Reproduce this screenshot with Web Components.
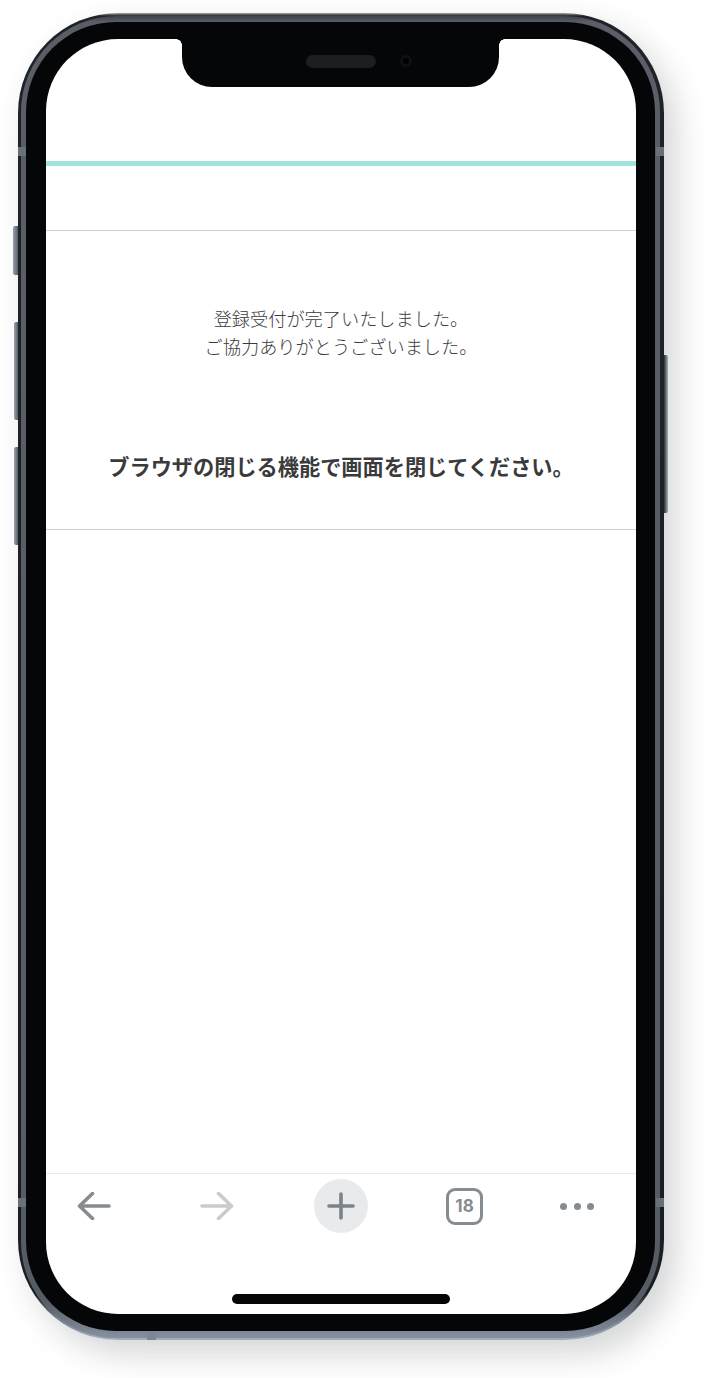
<!DOCTYPE html>
<html lang="ja">
<head>
<meta charset="utf-8">
<title>登録受付完了</title>
<style>
  html, body { margin: 0; background: #fff; overflow: hidden; }
  body { padding: 13px 0 0 18px; height: 1365px; box-sizing: content-box; }
</style>
</head>
<body>
<phone-frame>
  <page-header></page-header>
  <notice-panel>
    <span slot="lead">登録受付が完了いたしました。<br>ご協力ありがとうございました。</span>
    <span slot="close">ブラウザの閉じる機能で画面を閉じてください。</span>
  </notice-panel>
  <browser-toolbar count="18"></browser-toolbar>
</phone-frame>

<script>
class PhoneFrame extends HTMLElement {
  constructor() {
    super()
    this.attachShadow({mode: 'open'})
  }

  connectedCallback() {
    this.shadowRoot.innerHTML = `
      <style>
        :host { display: block; position: relative; width: 646px; height: 1327px; }
        .hull {
          box-sizing: border-box;
          width: 100%;
          height: 100%;
          padding: 3px 4px 2px 3px;
          border-radius: 100px;
          background: linear-gradient(180deg, #a2a5a9 0, #1f2226 3px, #1a1d21 1280px, #76808d 1305px, #a5afbb 100%);
          box-shadow: 12px 14px 32px rgba(40, 44, 50, .2);
        }
        .band {
          box-sizing: border-box;
          height: 100%;
          padding: 6px 5px 7px 5px;
          border-radius: 96px;
          background: linear-gradient(180deg, #3e4248 0, #5a5f67 6px, #565c64 1285px, #8691a0 100%);
        }
        .bezel {
          box-sizing: border-box;
          height: 100%;
          padding: 17px 19px 17px 20px;
          border-radius: 90px;
          background: #050607;
        }
        .screen {
          position: relative;
          display: flex;
          flex-direction: column;
          height: 100%;
          overflow: hidden;
          border-radius: 72px;
          background: #fff;
          font-family: "Noto Sans CJK JP", "Noto Sans", sans-serif;
        }
        .notch {
          position: absolute;
          top: 0;
          left: 136px;
          box-sizing: border-box;
          width: 317px;
          height: 48px;
          padding-left: 124px;
          display: flex;
          align-items: center;
          border-radius: 0 0 30px 30px;
          background: #050607;
        }
        .notch::before, .notch::after {
          content: '';
          position: absolute;
          top: 0;
          width: 6px;
          height: 6px;
        }
        .notch::before { left: -6px; background: radial-gradient(circle at 0 100%, transparent 5.6px, #050607 6px); }
        .notch::after { right: -6px; background: radial-gradient(circle at 100% 100%, transparent 5.6px, #050607 6px); }
        .speaker {
          width: 70px;
          height: 13px;
          margin-bottom: 4px;
          border-radius: 7px;
          background: #1c1e20;
        }
        .camera {
          width: 6px;
          height: 6px;
          margin: 0 0 4px 27px;
          border-radius: 50%;
          background: #000;
          box-shadow: 0 0 0 3px #0e1114;
        }
        .btn {
          position: absolute;
          width: 5px;
          background: linear-gradient(90deg, #9aa2ac, #5a6068);
          border-radius: 2px 0 0 2px;
        }
        .btn.right {
          left: 646px;
          width: 4px;
          background: linear-gradient(90deg, #2a2e34, #a8afb7);
          border-radius: 0 2px 2px 0;
        }
        .cut { position: absolute; background: #6a7078; }
        .cut.v { width: 8px; height: 9px; }
        .cut.h { width: 9px; height: 9px; }
      </style>
      <div class="btn" style="left:-5px;top:213px;height:49px"></div>
      <div class="btn" style="left:-4px;width:4px;top:309px;height:98px"></div>
      <div class="btn" style="left:-4px;width:4px;top:434px;height:98px"></div>
      <div class="btn right" style="top:342px;height:158px"></div>
      <div class="hull">
        <div class="band">
          <div class="bezel">
            <div class="screen">
              <slot></slot>
              <div class="notch"><div class="speaker"></div><div class="camera"></div></div>
            </div>
          </div>
        </div>
      </div>
      <div class="cut v" style="left:0;top:134px"></div>
      <div class="cut v" style="right:0;top:134px"></div>
      <div class="cut v" style="left:0;top:1185px"></div>
      <div class="cut v" style="right:0;top:1185px"></div>
      <div class="cut h" style="left:129px;bottom:0;background:#7c8794"></div>
    `
  }
}

class PageHeader extends HTMLElement {
  constructor() {
    super()
    this.attachShadow({mode: 'open'})
    this.shadowRoot.innerHTML = `
      <style>
        :host { display: block; flex: none; box-sizing: border-box; height: 191px; padding-top: 122px; }
        .rule { height: 5px; background: #a0e2de; }
      </style>
      <div class="rule"></div>
    `
  }
}

class NoticePanel extends HTMLElement {
  constructor() {
    super()
    this.attachShadow({mode: 'open'})
    this.shadowRoot.innerHTML = `
      <style>
        :host {
          display: block;
          flex: none;
          box-sizing: border-box;
          height: 300px;
          padding-top: 74px;
          border-top: 1px solid #cfcfcf;
          border-bottom: 1px solid #cfcfcf;
          text-align: center;
        }
        .lead { margin-top: -1px; font-size: 18.2px; line-height: 28px; color: #3a3a3a; font-weight: 300; opacity: .999; }
        .close { margin-top: 91px; font-size: 21.2px; line-height: 30px; font-weight: 700; color: #3a3a3a; white-space: nowrap; }
      </style>
      <div class="lead"><slot name="lead"></slot></div>
      <div class="close"><slot name="close"></slot></div>
    `
  }
}

class BrowserToolbar extends HTMLElement {
  constructor() {
    super()
    this.attachShadow({mode: 'open'})
  }

  connectedCallback() {
    const count = this.getAttribute('count')
    this.shadowRoot.innerHTML = `
      <style>
        :host {
          display: flex;
          flex-direction: column;
          margin-top: auto;
          box-sizing: border-box;
          height: 141px;
          border-top: 1px solid #e9e9e9;
        }
        .row { display: flex; align-items: center; height: 54px; margin-top: 5px; padding-left: 31px; }
        svg { display: block; flex: none; }
        .forward { margin-left: 89px; }
        .add {
          display: flex;
          align-items: center;
          justify-content: center;
          width: 54px;
          height: 54px;
          margin-left: 80px;
          border-radius: 50%;
          background: #e9eaec;
        }
        .tabs {
          box-sizing: border-box;
          width: 37px;
          height: 37px;
          margin-left: 78px;
          display: flex;
          align-items: center;
          justify-content: center;
          border: 3px solid #858c92;
          border-radius: 9px;
          color: #858c92;
          font: 700 17px Inter, "Liberation Sans", sans-serif;
        }
        .more { display: flex; gap: 6.5px; margin-left: 77px; }
        .more i { width: 7px; height: 7px; border-radius: 50%; background: #858c92; }
        .home {
          width: 218px;
          height: 10px;
          margin: auto auto 10px;
          border-radius: 5px;
          background: #040506;
        }
      </style>
      <div class="row">
        <svg width="34" height="28" viewBox="0 0 34 28" fill="none" stroke="#858c92" stroke-width="3.6" stroke-linecap="round" stroke-linejoin="round">
          <path d="M32 14H3M15.5 1.500L2.500 14l13 12.500"/>
        </svg>
        <svg class="forward" width="34" height="28" viewBox="0 0 34 28" fill="none" stroke="#c9cbcc" stroke-width="3.6" stroke-linecap="round" stroke-linejoin="round">
          <path d="M2 14h29M18.500 1.500L31.500 14l-13 12.500"/>
        </svg>
        <div class="add">
          <svg width="28" height="28" viewBox="0 0 28 28" fill="none" stroke="#7b8388" stroke-width="3.6" stroke-linecap="round">
            <path d="M14 2v24M2 14h24"/>
          </svg>
        </div>
        <div class="tabs">${count}</div>
        <div class="more"><i></i><i></i><i></i></div>
      </div>
      <div class="home"></div>
    `
  }
}

customElements.define('phone-frame', PhoneFrame)
customElements.define('page-header', PageHeader)
customElements.define('notice-panel', NoticePanel)
customElements.define('browser-toolbar', BrowserToolbar)
</script>
</body>
</html>
